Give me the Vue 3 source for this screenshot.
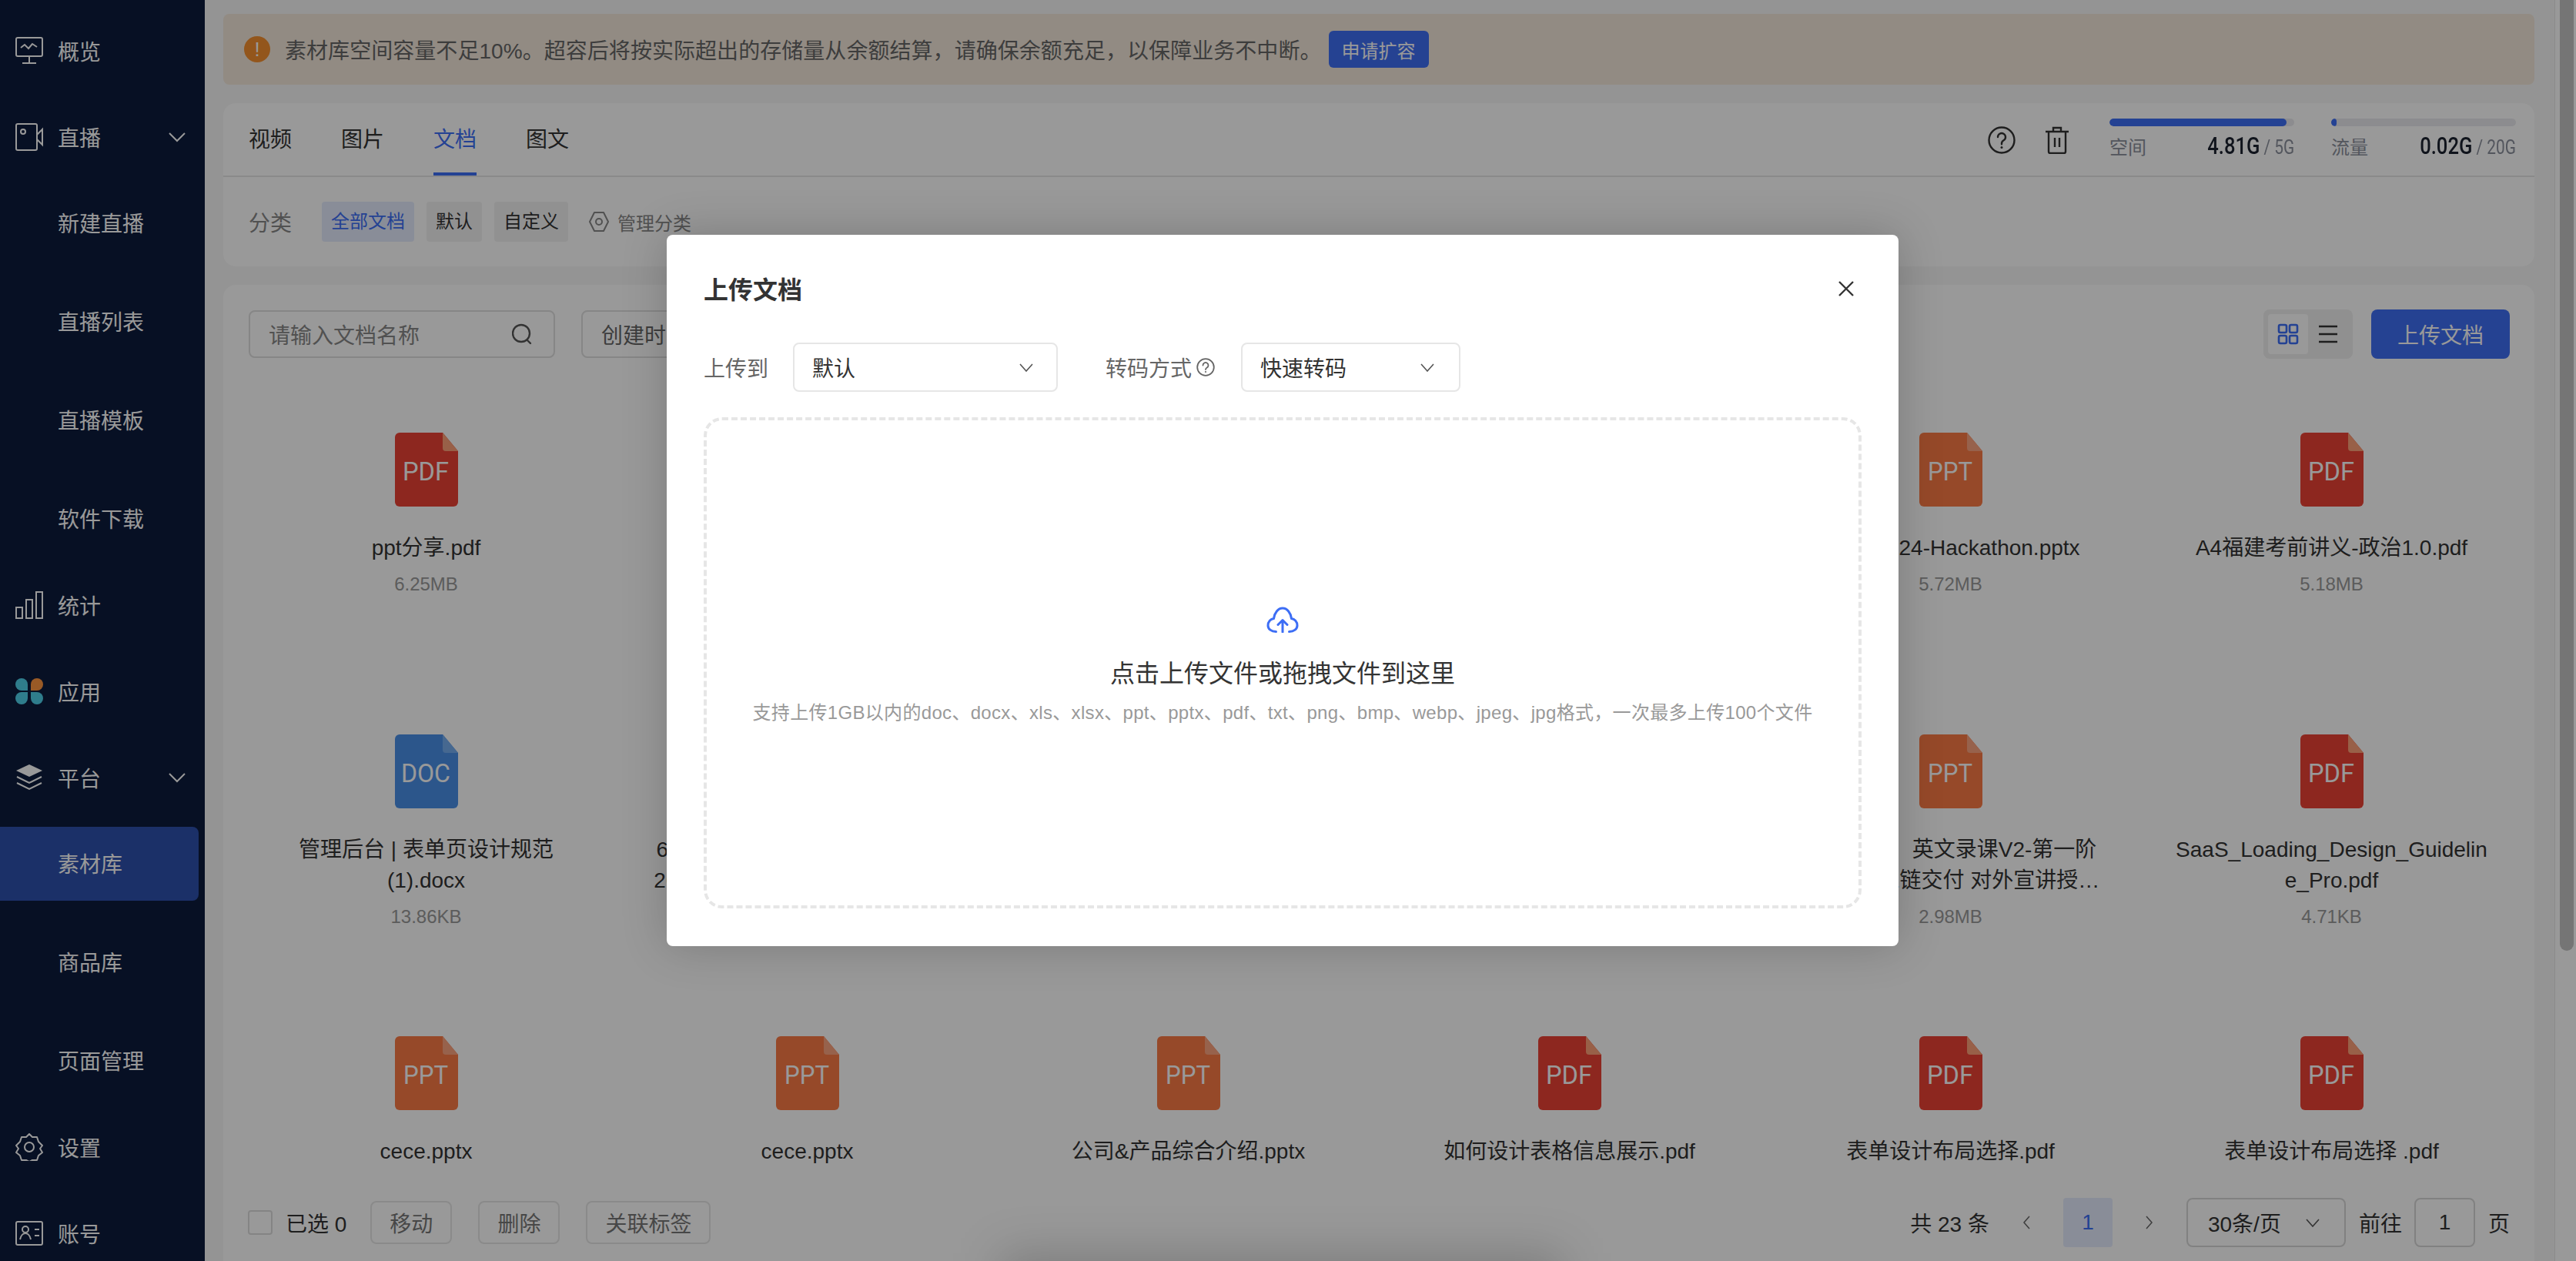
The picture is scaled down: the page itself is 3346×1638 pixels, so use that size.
<template>
  <div class="page">
    <aside class="side">
      <template v-for="item in menu" :key="item.label">
        <div class="side__item">
          <svg class="side__icon" viewBox="0 0 36 36" fill="none" stroke="#fff" stroke-width="2" v-html="item.icon"></svg>
          <span class="side__label">{{ item.label }}</span>
          <svg v-if="item.children" class="side__arrow" viewBox="0 0 22 14" fill="none" stroke="#fff" stroke-width="2"><path d="M1 2l10 10L21 2"/></svg>
        </div>
        <div v-if="item.children" class="side__children">
          <div
            v-for="child in item.children"
            :key="child"
            class="side__child"
            :class="{ 'side__child--active': child === '素材库' }"
          >{{ child }}</div>
        </div>
      </template>
    </aside>

    <main class="main">
      <div class="notice">
        <span class="notice__icon">!</span>
        <span class="notice__text">素材库空间容量不足10%。超容后将按实际超出的存储量从余额结算，请确保余额充足，以保障业务不中断。</span>
        <button class="notice__btn">申请扩容</button>
      </div>

      <section class="head">
        <div class="tabs">
          <div
            v-for="tab in tabs"
            :key="tab"
            class="tabs__item"
            :class="{ 'tabs__item--active': tab === '文档' }"
          >{{ tab }}</div>
          <div class="usage">
            <svg class="usage__help" viewBox="0 0 36 36" fill="none" stroke="#333" stroke-width="2.4">
              <circle cx="18" cy="18" r="16.5"/>
              <path d="M13 14a5 5 0 1 1 7.6 4.3c-1.700 1-2.600 2-2.600 4v1" stroke-linecap="round"/>
              <circle cx="18" cy="27.500" r="1.500" fill="#333" stroke="none"/>
            </svg>
            <svg class="usage__trash" viewBox="0 0 32 36" fill="none" stroke="#333" stroke-width="2.4">
              <path d="M1 7h30M11 7V2h10v5M5 7v26a2 2 0 0 0 2 2h18a2 2 0 0 0 2-2V7M13 15v12M19 15v12"/>
            </svg>
            <div v-for="u in usage" :key="u.label" class="meter">
              <div class="meter__track"><div class="meter__fill" :style="{ width: u.percent + '%' }"></div></div>
              <div class="meter__row">
                <span class="meter__label">{{ u.label }}</span>
                <span class="meter__nums"><b class="meter__value">{{ u.value }}</b><span class="meter__total"> / {{ u.total }}</span></span>
              </div>
            </div>
          </div>
        </div>
        <div class="cats">
          <span class="cats__title">分类</span>
          <span class="cats__chip cats__chip--active">全部文档</span>
          <span class="cats__chip">默认</span>
          <span class="cats__chip">自定义</span>
          <span class="cats__manage">
            <svg width="26" height="28" viewBox="0 0 26 28" fill="none" stroke="#888" stroke-width="2">
              <path d="M7 2h12l6 12-6 12H7L1 14z" stroke-linejoin="round"/>
              <circle cx="13" cy="14" r="4"/>
            </svg>
            管理分类
          </span>
        </div>
      </section>

      <section class="panel">
        <div class="bar">
          <div class="bar__search">
            <span>请输入文档名称</span>
            <svg width="26" height="28" viewBox="0 0 26 28" fill="none" stroke="#555" stroke-width="2.4">
              <circle cx="12" cy="13" r="11"/>
              <path d="M20 22l4 4" stroke-linecap="round"/>
            </svg>
          </div>
          <div class="bar__date">创建时间</div>
          <div class="bar__views">
            <span class="bar__view bar__view--active">
              <svg width="28" height="28" viewBox="0 0 28 28" fill="none" stroke="#3d6ef5" stroke-width="2.600">
                <rect x="2" y="2" width="10" height="10" rx="2"/>
                <rect x="16" y="2" width="10" height="10" rx="2"/>
                <rect x="2" y="16" width="10" height="10" rx="2"/>
                <rect x="16" y="16" width="10" height="10" rx="2"/>
              </svg>
            </span>
            <span class="bar__view">
              <svg width="26" height="24" viewBox="0 0 26 24" fill="none" stroke="#333" stroke-width="2.600"><path d="M1 2h24M1 12h24M1 22h24"/></svg>
            </span>
          </div>
          <button class="bar__upload">上传文档</button>
        </div>

        <div class="files">
          <div v-for="(f, i) in files" :key="i" class="file">
            <svg class="file__icon" viewBox="0 0 82 96">
              <path :fill="kinds[f.kind].body" d="M6 0h56l20 24v66a6 6 0 0 1-6 6H6a6 6 0 0 1-6-6V6a6 6 0 0 1 6-6z"/>
              <path :fill="kinds[f.kind].fold" d="M62 0l20 24H66a4 4 0 0 1-4-4z"/>
              <text
                x="40"
                y="62"
                text-anchor="middle"
                lengthAdjust="spacingAndGlyphs"
                :textLength="kinds[f.kind].textWidth"
                class="file__kind"
              >{{ f.kind }}</text>
            </svg>
            <div class="file__name">{{ f.name }}</div>
            <div class="file__size">{{ f.size }}</div>
          </div>
        </div>

        <div class="foot">
          <span class="foot__check"></span>
          <span class="foot__count">已选 0</span>
          <button class="foot__btn">移动</button>
          <button class="foot__btn">删除</button>
          <button class="foot__btn">关联标签</button>
          <div class="pager">
            <span class="pager__total">共 23 条</span>
            <svg class="pager__nav" width="10" height="20" viewBox="0 0 10 20" fill="none" stroke="#666" stroke-width="1.500"><path d="M9 2L2 10l7 8"/></svg>
            <span class="pager__num">1</span>
            <svg class="pager__nav" width="10" height="20" viewBox="0 0 10 20" fill="none" stroke="#666" stroke-width="1.500"><path d="M1 2l7 8-7 8"/></svg>
            <span class="pager__size">
              30条/页
              <svg width="18" height="11" viewBox="0 0 18 11" fill="none" stroke="#555" stroke-width="1.600"><path d="M1 1l8 9 8-9"/></svg>
            </span>
            <span>前往</span>
            <span class="pager__jump">1</span>
            <span>页</span>
          </div>
        </div>
      </section>
    </main>

    <div class="scroll"><div class="scroll__thumb"></div></div>

    <div class="mask">
      <div class="glow"></div>
      <div class="dialog">
        <div class="dialog__head">
          <h3 class="dialog__title">上传文档</h3>
          <svg width="22" height="22" viewBox="0 0 22 22" fill="none" stroke="#333" stroke-width="2.400"><path d="M2 2l18 18M20 2L2 20"/></svg>
        </div>
        <div class="form">
          <span class="form__label">上传到</span>
          <div class="form__select form__select--target">
            默认
            <svg width="18" height="11" viewBox="0 0 18 11" fill="none" stroke="#555" stroke-width="1.600"><path d="M1 1l8 9 8-9"/></svg>
          </div>
          <span class="form__label form__label--mode">
            转码方式
            <svg width="24" height="24" viewBox="0 0 24 24" fill="none" stroke="#666" stroke-width="1.800">
              <circle cx="12" cy="12" r="10.800"/>
              <path d="M8.500 9.500a3.500 3.500 0 1 1 5.300 3c-1.200.7-1.800 1.400-1.800 2.600" stroke-linecap="round"/>
              <circle cx="12" cy="18" r="1.100" fill="#666" stroke="none"/>
            </svg>
          </span>
          <div class="form__select form__select--mode">
            快速转码
            <svg width="18" height="11" viewBox="0 0 18 11" fill="none" stroke="#555" stroke-width="1.600"><path d="M1 1l8 9 8-9"/></svg>
          </div>
        </div>
        <div class="drop">
          <svg width="42" height="34" viewBox="0 0 42 34" fill="none" stroke="#3d6ef5" stroke-width="3" stroke-linecap="round" stroke-linejoin="round">
            <path d="M12.500 32.500C6 32.500 2 29 2 24.500 2 19.500 5.500 16 9.500 15.500 10.500 8 15 2 21 2c6 0 10.500 6 11.500 13.500 4 .5 7.500 4 7.500 9 0 4.500-4 8-10.500 8"/>
            <path d="M21 33V18M15 23.500l6-6 6 6"/>
          </svg>
          <div class="drop__title">点击上传文件或拖拽文件到这里</div>
          <div class="drop__hint">支持上传1GB以内的doc、docx、xls、xlsx、ppt、pptx、pdf、txt、png、bmp、webp、jpeg、jpg格式，一次最多上传100个文件</div>
        </div>
      </div>
    </div>
  </div>
</template>

<script setup>
const menu = [
  {
    label: '概览',
    icon: '<rect x="1" y="1" width="34" height="24" rx="2"/><path d="M7 14l5-4 5 5 5-6 6 4M18 25v8M9 34h18"/>',
  },
  {
    label: '直播',
    icon: '<rect x="1" y="1" width="27" height="34" rx="2"/><circle cx="10" cy="11" r="3"/><path d="M28 15l7-7v20l-7-7"/>',
    children: ['新建直播', '直播列表', '直播模板', '软件下载'],
  },
  {
    label: '统计',
    icon: '<rect x="1" y="21" width="8" height="14"/><rect x="14" y="11" width="8" height="24"/><rect x="27" y="1" width="8" height="34"/>',
  },
  {
    label: '应用',
    icon: '<g stroke="none"><path fill="#4fd0ea" d="M8 1a8 8 0 0 1 8 8v8H8a8 8 0 0 1 0-16z"/><path fill="#ff9640" d="M28 1a8 8 0 0 1 0 16h-8V9a8 8 0 0 1 8-8z"/><path fill="#4fd0ea" d="M8 35a8 8 0 0 1 0-16h8v8a8 8 0 0 1-8 8z"/><path fill="#4fd0ea" d="M28 35a8 8 0 0 0 0-16h-8v8a8 8 0 0 0 8 8z"/></g>',
  },
  {
    label: '平台',
    icon: '<path fill="#fff" stroke="none" d="M18 1l17 8-17 8L1 9z"/><path d="M2 17l16 8 16-8M2 25l16 8 16-8"/>',
    children: ['素材库', '商品库', '页面管理'],
  },
  {
    label: '设置',
    icon: '<path d="M18 1l4 4h6l2 6 5 5-3 4 3 5-5 4-2 6h-6l-4 2-4-2H8l-2-6-5-4 3-5-3-4 5-5 2-6h6z" stroke-linejoin="round"/><circle cx="18" cy="18" r="6"/>',
  },
  {
    label: '账号',
    icon: '<rect x="1" y="3" width="34" height="30" rx="2"/><circle cx="13" cy="13" r="4"/><path d="M6 26c1-5 4-8 7-8s6 3 7 8M25 13h6M25 21h6"/>',
  },
]

const tabs = ['视频', '图片', '文档', '图文']

const usage = [
  { label: '空间', value: '4.81G', total: '5G', percent: 96 },
  { label: '流量', value: '0.02G', total: '20G', percent: 3 },
]

const kinds = {
  PDF: { body: '#ec4234', fold: '#fda078', textWidth: 60 },
  PPT: { body: '#fb7b45', fold: '#fca37f', textWidth: 58 },
  DOC: { body: '#4a90e8', fold: '#76adf0', textWidth: 64 },
}

const files = [
  { kind: 'PDF', name: 'ppt分享.pdf', size: '6.25MB' },
  { kind: 'PPT', name: '产品介绍.pptx', size: '3.12MB' },
  { kind: 'PDF', name: '操作手册.pdf', size: '2.40MB' },
  { kind: 'PDF', name: '培训资料.pdf', size: '1.86MB' },
  { kind: 'PPT', name: 'DT大会 24-Hackathon.pptx', size: '5.72MB' },
  { kind: 'PDF', name: 'A4福建考前讲义-政治1.0.pdf', size: '5.18MB' },
  { kind: 'DOC', name: '管理后台 | 表单页设计规范(1).docx', size: '13.86KB' },
  { kind: 'PPT', name: '618-大促直播方案与运营复盘总2024年度版本结案报告最终定稿版.pptx', size: '8.20MB' },
  { kind: 'PDF', name: '活动方案.pdf', size: '1.05MB' },
  { kind: 'PDF', name: '使用说明.pdf', size: '760KB' },
  { kind: 'PPT', name: '产品培训　英文录课V2-第一阶段供应商1链交付 对外宣讲授课资料.pptx', size: '2.98MB' },
  { kind: 'PDF', name: 'SaaS_Loading_Design_Guideline_Pro.pdf', size: '4.71KB' },
  { kind: 'PPT', name: 'cece.pptx', size: '' },
  { kind: 'PPT', name: 'cece.pptx', size: '' },
  { kind: 'PPT', name: '公司&产品综合介绍.pptx', size: '' },
  { kind: 'PDF', name: '如何设计表格信息展示.pdf', size: '' },
  { kind: 'PDF', name: '表单设计布局选择.pdf', size: '' },
  { kind: 'PDF', name: '表单设计布局选择 .pdf', size: '' },
]
</script>

<style>
body {
  margin: 0;
}
</style>

<style scoped>
.page {
  position: relative;
  display: flex;
  width: 3346px;
  height: 1638px;
  overflow: hidden;
  background: #f7f7f7;
  color: #333;
  font-family: "Liberation Sans", "Noto Sans CJK SC", sans-serif;
  font-size: 28px;
}

button {
  font: inherit;
  border: 0;
}

.side {
  flex: none;
  width: 266px;
  padding-top: 10px;
  box-sizing: border-box;
  background: #0d1b3c;
  color: #fff;
}

.side__item {
  display: flex;
  align-items: center;
  height: 112px;
  padding-left: 20px;
}

.side__icon {
  width: 36px;
  height: 36px;
  margin-right: 19px;
}

.side__arrow {
  width: 22px;
  height: 14px;
  margin-left: 88px;
}

.side__children {
  display: flex;
  flex-direction: column;
  gap: 32px;
  padding: 8px 0;
}

.side__child {
  width: 258px;
  height: 96px;
  padding-left: 75px;
  box-sizing: border-box;
  line-height: 100px;
  border-radius: 0 8px 8px 0;
}

.side__child--active {
  background: #2d50ae;
}

.main {
  flex: 1;
  min-width: 0;
  display: flex;
  flex-direction: column;
  gap: 24px;
  padding: 18px 26px 0 24px;
}

.notice {
  flex: none;
  display: flex;
  align-items: center;
  height: 92px;
  padding-left: 27px;
  box-sizing: border-box;
  background: #f3e8db;
  border-radius: 8px;
  color: #666;
}

.notice__icon {
  width: 34px;
  height: 34px;
  margin-right: 19px;
  border-radius: 50%;
  background: #f5902f;
  color: #fff;
  text-align: center;
  font-size: 26px;
  line-height: 34px;
}

.notice__text {
  letter-spacing: 0.05px;
}

.notice__btn {
  height: 48px;
  width: 130px;
  margin-left: 9px;
  background: #3f6ff4;
  color: #fff;
  font-size: 24px;
  border-radius: 6px;
}

.head {
  flex: none;
  height: 212px;
  background: #fff;
  border-radius: 16px;
}

.tabs {
  display: flex;
  gap: 64px;
  height: 94px;
  padding-left: 33px;
  border-bottom: 2px solid #e6e6e6;
}

.tabs__item {
  width: 56px;
  height: 90px;
  line-height: 96px;
}

.tabs__item--active {
  color: #3d6ef5;
  border-bottom: 4px solid #3d6ef5;
}

.usage {
  margin-left: auto;
  display: flex;
  align-items: flex-start;
  padding: 20px 24px 0 0;
}

.usage__help {
  width: 36px;
  height: 36px;
  margin: 10px 0 0;
}

.usage__trash {
  width: 32px;
  height: 36px;
  margin: 10px 52px 0 38px;
}

.meter {
  width: 240px;
}

.meter + .meter {
  margin-left: 48px;
}

.meter__track {
  height: 10px;
  border-radius: 5px;
  background: #eaeaee;
  overflow: hidden;
}

.meter__fill {
  height: 100%;
  border-radius: 5px;
  background: #3d6ef5;
}

.meter__row {
  display: flex;
  align-items: baseline;
  justify-content: space-between;
  margin-top: 6px;
}

.meter__label {
  color: #8a8f9c;
  font-size: 24px;
}

.meter__nums {
  display: inline-block;
  transform: scaleX(0.8);
  transform-origin: right center;
  white-space: nowrap;
  font-family: Roboto, sans-serif;
}

.meter__value {
  color: #1c2230;
  font-weight: 500;
  font-size: 32px;
}

.meter__total {
  color: #8a8f9c;
  font-size: 26px;
}

.cats {
  display: flex;
  align-items: center;
  height: 116px;
  padding-left: 33px;
  font-size: 24px;
}

.cats__title {
  width: 95px;
  color: #888;
  font-size: 28px;
}

.cats__chip {
  height: 52px;
  padding: 0 12px;
  margin-right: 16px;
  line-height: 52px;
  background: #f2f2f2;
  border-radius: 4px;
}

.cats__chip--active {
  background: #e5ecfd;
  color: #3d6ef5;
}

.cats__manage {
  display: flex;
  align-items: center;
  gap: 11px;
  margin-left: 11px;
  color: #888;
}

.panel {
  flex: 1;
  min-height: 0;
  display: flex;
  flex-direction: column;
  background: #fff;
  border-radius: 16px 16px 0 0;
}

.bar {
  flex: none;
  display: flex;
  align-items: center;
  height: 64px;
  margin: 32px 32px 0 33px;
}

.bar__search,
.bar__date {
  display: flex;
  align-items: center;
  justify-content: space-between;
  box-sizing: border-box;
  height: 62px;
  padding: 0 24px;
  border: 2px solid #e0e0e0;
  border-radius: 8px;
  color: #888;
}

.bar__search {
  width: 398px;
  padding-right: 28px;
}

.bar__date {
  margin-left: 34px;
  width: 300px;
  color: #666;
}

.bar__views {
  display: flex;
  align-items: center;
  width: 116px;
  height: 64px;
  margin-left: auto;
  padding-left: 6px;
  box-sizing: border-box;
  background: #f0f0f0;
  border-radius: 8px;
}

.bar__view {
  display: flex;
  align-items: center;
  justify-content: center;
  width: 52px;
  height: 52px;
  border-radius: 4px;
}

.bar__view--active {
  background: #fff;
}

.bar__upload {
  width: 180px;
  height: 64px;
  margin-left: 24px;
  background: #3f6ff4;
  color: #fff;
  border-radius: 8px;
}

.files {
  flex: 1;
  min-height: 0;
  overflow: hidden;
  display: grid;
  grid-template-columns: repeat(6, 495px);
  grid-auto-rows: 392px;
  padding: 56px 16px 0;
}

.file {
  display: flex;
  flex-direction: column;
  align-items: center;
  padding-top: 40px;
  box-sizing: border-box;
}

.file__icon {
  flex: none;
  width: 82px;
  height: 96px;
}

.file__kind {
  fill: #fff;
  font-family: Roboto, sans-serif;
  font-size: 33px;
}

.file__name {
  width: 406px;
  margin-top: 34px;
  line-height: 40px;
  text-align: center;
  overflow-wrap: anywhere;
  display: -webkit-box;
  -webkit-box-orient: vertical;
  -webkit-line-clamp: 2;
  overflow: hidden;
}

.file__size {
  margin-top: 7px;
  line-height: 40px;
  color: #999;
  font-size: 24px;
}

.foot {
  flex: none;
  display: flex;
  align-items: center;
  height: 118px;
  padding: 18px 32px 0 32px;
  box-sizing: border-box;
  background: #fff;
}

.foot__check {
  width: 32px;
  height: 32px;
  box-sizing: border-box;
  border: 2px solid #ddd;
  border-radius: 4px;
}

.foot__count {
  margin: 0 31px 0 17px;
}

.foot__btn {
  height: 56px;
  padding: 0 23px;
  margin-right: 34px;
  background: #fff;
  box-sizing: border-box;
  border: 2px solid #e6e6e6;
  border-radius: 8px;
  color: #777;
}

.pager {
  margin-left: auto;
  display: flex;
  align-items: center;
}

.pager__total {
  margin-right: 43px;
}

.pager__num {
  width: 64px;
  height: 64px;
  margin: 0 43px;
  line-height: 64px;
  text-align: center;
  color: #3d6ef5;
  background: #e5ecfd;
  border-radius: 4px;
}

.pager__size {
  display: flex;
  align-items: center;
  justify-content: space-between;
  box-sizing: border-box;
  width: 207px;
  height: 64px;
  margin: 0 17px 0 43px;
  padding: 0 32px 0 26px;
  border: 2px solid #d8d8d8;
  border-radius: 8px;
}

.pager__jump {
  width: 79px;
  height: 64px;
  margin: 0 17px 0 16px;
  box-sizing: border-box;
  line-height: 60px;
  text-align: center;
  border: 2px solid #d8d8d8;
  border-radius: 8px;
}

.scroll {
  flex: none;
  width: 28px;
  padding-left: 6px;
  box-sizing: border-box;
  background: #fff;
  border-left: 1px solid #e8e8e8;
}

.scroll__thumb {
  width: 18px;
  height: 1235px;
  background: #c4c4c4;
  border-radius: 0 0 9px 9px;
}

.mask {
  position: absolute;
  inset: 0;
  background: rgba(0, 0, 0, 0.4);
}

.glow {
  position: absolute;
  left: 1300px;
  bottom: -70px;
  width: 730px;
  height: 80px;
  background: rgba(0, 0, 0, 0.18);
  filter: blur(30px);
}

.dialog {
  position: absolute;
  left: 866px;
  top: 305px;
  width: 1600px;
  height: 924px;
  padding: 0 48px;
  box-sizing: border-box;
  background: #fff;
  border-radius: 8px;
  box-shadow: 0 0 60px rgba(0, 0, 0, 0.2);
}

.dialog__head {
  display: flex;
  align-items: center;
  justify-content: space-between;
  height: 140px;
  padding-right: 9px;
}

.dialog__title {
  margin: -2px 0 0;
  font-size: 32px;
  font-weight: 600;
}

.form {
  display: flex;
  align-items: center;
  height: 64px;
}

.form__label {
  color: #666;
}

.form__label--mode {
  display: flex;
  align-items: center;
  gap: 6px;
  margin-left: 62px;
}

.form__select {
  display: flex;
  align-items: center;
  justify-content: space-between;
  box-sizing: border-box;
  height: 64px;
  padding: 0 32px 0 23px;
  border: 2px solid #e6e6e6;
  border-radius: 8px;
}

.form__select--target {
  width: 344px;
  margin-left: 32px;
  padding-right: 30px;
}

.form__select--mode {
  width: 285px;
  margin-left: 34px;
}

.drop {
  display: flex;
  flex-direction: column;
  align-items: center;
  box-sizing: border-box;
  height: 638px;
  margin-top: 33px;
  padding-top: 242px;
  border: 4px dashed #e6e6e6;
  border-radius: 24px;
}

.drop__title {
  margin-top: 29px;
  font-size: 32px;
  line-height: 48px;
}

.drop__hint {
  margin-top: 7px;
  font-size: 24px;
  line-height: 40px;
  letter-spacing: 0.32px;
  color: #999;
}
</style>
